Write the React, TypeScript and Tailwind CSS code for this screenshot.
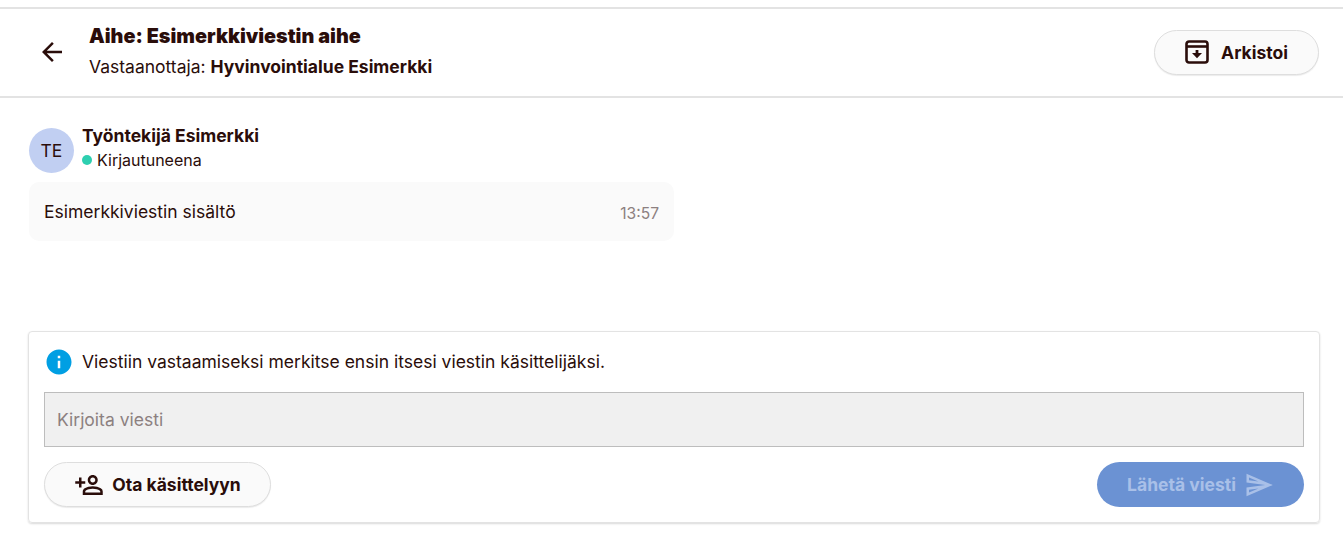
import React from 'react';
import { MdArrowBack, MdInfo, MdOutlinePersonAddAlt, MdOutlineSend } from 'react-icons/md';

const ArchiveIcon: React.FC = () => (
  <svg className="-mt-[1px]" width="24" height="24" viewBox="0 0 24 24" fill="none" stroke="currentColor" strokeWidth="2.6">
    <rect x="1.5" y="1.5" width="21" height="21" rx="2.5" />
    <path d="M1.5 6.5h21" />
    <path d="M12 10v4" strokeWidth="2.8" />
    <path d="M7 13h10L12 18.2z" fill="currentColor" stroke="none" />
  </svg>
);

const App: React.FC = () => {
  return (
    <div className="h-[551px] bg-white pt-[7px] font-['Inter',sans-serif] text-[#2a0d0a] overflow-hidden">
      {/* Header */}
      <header className="h-[91px] border-y-2 border-[#e3e3e3] flex items-center justify-between pl-[28px] pr-[24px]">
        <div className="flex items-center">
          <button className="w-[48px] flex justify-center -mt-[1px]">
            <MdArrowBack size={30} />
          </button>
          <div className="ml-[13px] mb-[3px]">
            <h1 className="text-[19.8px] leading-[27px] font-black">Aihe: Esimerkkiviestin aihe</h1>
            <p className="text-[17.5px] leading-[26px] mt-[4px]">
              Vastaanottaja: <span className="font-bold">Hyvinvointialue Esimerkki</span>
            </p>
          </div>
        </div>
        <button className="h-[45px] w-[165px] rounded-full border border-[#dedede] bg-[#fafafa] shadow-[0_1px_1px_rgba(0,0,0,0.08)] flex items-center justify-center gap-[12px] text-[17.5px] font-bold">
          <ArchiveIcon />
          <span className="mt-[1px]">Arkistoi</span>
        </button>
      </header>

      {/* Message */}
      <section className="pl-[29px] pt-[30px]">
        <div className="flex items-start gap-[8px]">
          <div className="w-[45px] h-[45px] pt-[2px] rounded-full bg-[#c1cff2] flex items-center justify-center text-[17.5px]">TE</div>
          <div className="-mt-[5px]">
            <div className="text-[17.5px] leading-[26px] font-bold">Työntekijä Esimerkki</div>
            <div className="flex items-center gap-[5px] text-[16px] leading-[24px] -mt-[1px]">
              <span className="w-[10px] h-[10px] rounded-full bg-[#2dcfb0]" />
              Kirjautuneena
            </div>
          </div>
        </div>
        <div className="w-[645px] h-[59px] mt-[9px] rounded-[10px] bg-[#fafafa] flex items-center justify-between pl-[15px] pr-[15px]">
          <span className="text-[17.5px] leading-[26px]">Esimerkkiviestin sisältö</span>
          <span className="text-[15.6px] leading-[21px] text-[#8c8080] mt-[4px]">13:57</span>
        </div>
      </section>

      {/* Reply box */}
      <section className="ml-[28px] mr-[23px] mt-[90px] h-[192px] rounded-[4px] border border-[#e3e3e3] shadow-[0_1px_2px_rgba(0,0,0,0.15)] px-[15px] pt-[16px]">
        <div className="flex items-center gap-[8px] h-[28px]">
          <MdInfo size={30} className="text-[#009fe3]" />
          <span className="text-[17.5px] leading-[26px]">Viestiin vastaamiseksi merkitse ensin itsesi viestin käsittelijäksi.</span>
        </div>
        <div className="mt-[16px] h-[55px] pt-[2px] border border-[#bdbdbd] bg-[#f0f0f0] flex items-center px-[12px] text-[17.5px] text-[#8c8080]">
          Kirjoita viesti
        </div>
        <div className="mt-[15px] flex items-center justify-between">
          <button className="h-[45px] w-[227px] rounded-full border border-[#dedede] bg-[#fafafa] shadow-[0_1px_1px_rgba(0,0,0,0.08)] flex items-center justify-center gap-[8px] text-[17.5px] font-bold">
            <MdOutlinePersonAddAlt size={30} className="-scale-x-100" />
            <span className="mt-[1px]">Ota käsittelyyn</span>
          </button>
          <button className="h-[45px] w-[207px] rounded-full bg-[#6b92d3] text-[#a9c0e8] flex items-center justify-center gap-[8px] text-[17.5px] font-bold">
            <span className="mt-[1px]">Lähetä viesti</span>
            <MdOutlineSend size={30} />
          </button>
        </div>
      </section>
    </div>
  );
};

export default App;
